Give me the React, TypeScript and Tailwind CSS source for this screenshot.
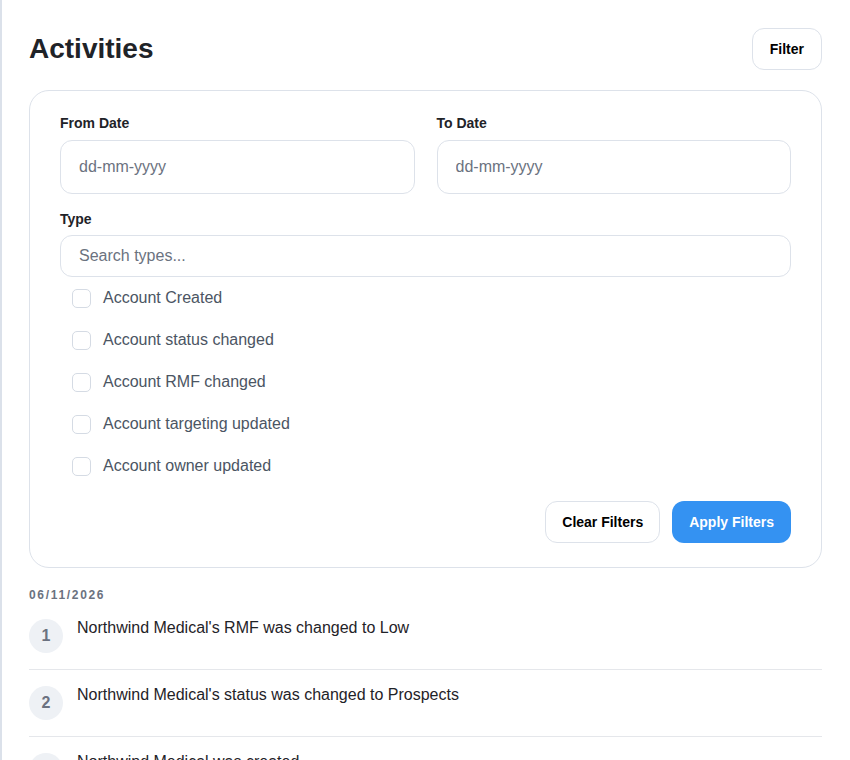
import React from 'react';

const activityTypes = [
  'Account Created',
  'Account status changed',
  'Account RMF changed',
  'Account targeting updated',
  'Account owner updated',
];

const activities = [
  { id: 1, text: "Northwind Medical's RMF was changed to Low" },
  { id: 2, text: "Northwind Medical's status was changed to Prospects" },
  { id: 3, text: 'Northwind Medical was created' },
];

export default function App() {
  return (
    <div
      className="min-h-screen bg-white border-l-2 border-[#dbe1ea] pl-[27px] pr-[28px] pt-[28px] text-[#1f2328]"
      style={{ fontFamily: '"Liberation Sans", Arial, sans-serif' }}
    >
      {/* header */}
      <div className="flex items-center justify-between h-[42px]">
        <h1 className="text-[28px] font-bold leading-none text-[#1f2328]">Activities</h1>
        <button className="h-[42px] px-[17px] rounded-xl border border-[#dde2ea] bg-white text-sm font-bold text-black">
          Filter
        </button>
      </div>

      {/* filter panel */}
      <div className="mt-5 rounded-[20px] border border-[#dde2ea] px-[30px] pt-[22px] pb-6">
        <div className="grid grid-cols-2 gap-[22px]">
          <div>
            <label className="block text-sm font-bold leading-5 mb-[7px]">From Date</label>
            <input
              placeholder="dd-mm-yyyy"
              className="w-full h-[54px] rounded-xl border border-[#dde2ea] px-[18px] text-base text-[#374151] placeholder:text-[#6b7280] outline-none"
            />
          </div>
          <div>
            <label className="block text-sm font-bold leading-5 mb-[7px]">To Date</label>
            <input
              placeholder="dd-mm-yyyy"
              className="w-full h-[54px] rounded-xl border border-[#dde2ea] px-[18px] text-base text-[#374151] placeholder:text-[#6b7280] outline-none"
            />
          </div>
        </div>

        <div className="mt-[15px]">
          <label className="block text-sm font-bold leading-5 mb-[6px]">Type</label>
          <input
            placeholder="Search types..."
            className="w-full h-[42px] rounded-xl border border-[#dde2ea] px-[18px] text-base text-[#374151] placeholder:text-[#6b7280] outline-none"
          />
          <div className="mt-[9px] pl-3 flex flex-col gap-[18px]">
            {activityTypes.map((t) => (
              <label key={t} className="flex items-center gap-3 h-6 text-base text-[#4b5563]">
                <span className="w-[19px] h-[19px] rounded-[5px] border border-[#d5dbe4] bg-white shrink-0" />
                {t}
              </label>
            ))}
          </div>
        </div>

        <div className="mt-[23px] flex justify-end gap-3">
          <button className="h-[42px] px-4 rounded-xl border border-[#dde2ea] bg-white text-sm font-bold text-black">
            Clear Filters
          </button>
          <button className="h-[42px] px-[17px] rounded-xl bg-[#3492f2] text-sm font-bold text-white">
            Apply Filters
          </button>
        </div>
      </div>

      {/* activity list */}
      <div className="mt-[19px]">
        <div className="text-xs font-bold leading-4 tracking-[0.14em] text-[#6b7280]">06/11/2026</div>
        {activities.map((a) => (
          <div key={a.id} className="flex items-start gap-[14px] py-4 border-b border-[#e5e7eb]">
            <div className="w-[34px] h-[34px] rounded-full bg-[#eef1f5] flex items-center justify-center text-base font-bold text-[#6b7280] shrink-0">
              {a.id}
            </div>
            <div className="-mt-[3px] text-base leading-6 text-[#1f2328]">{a.text}</div>
          </div>
        ))}
      </div>
    </div>
  );
}
